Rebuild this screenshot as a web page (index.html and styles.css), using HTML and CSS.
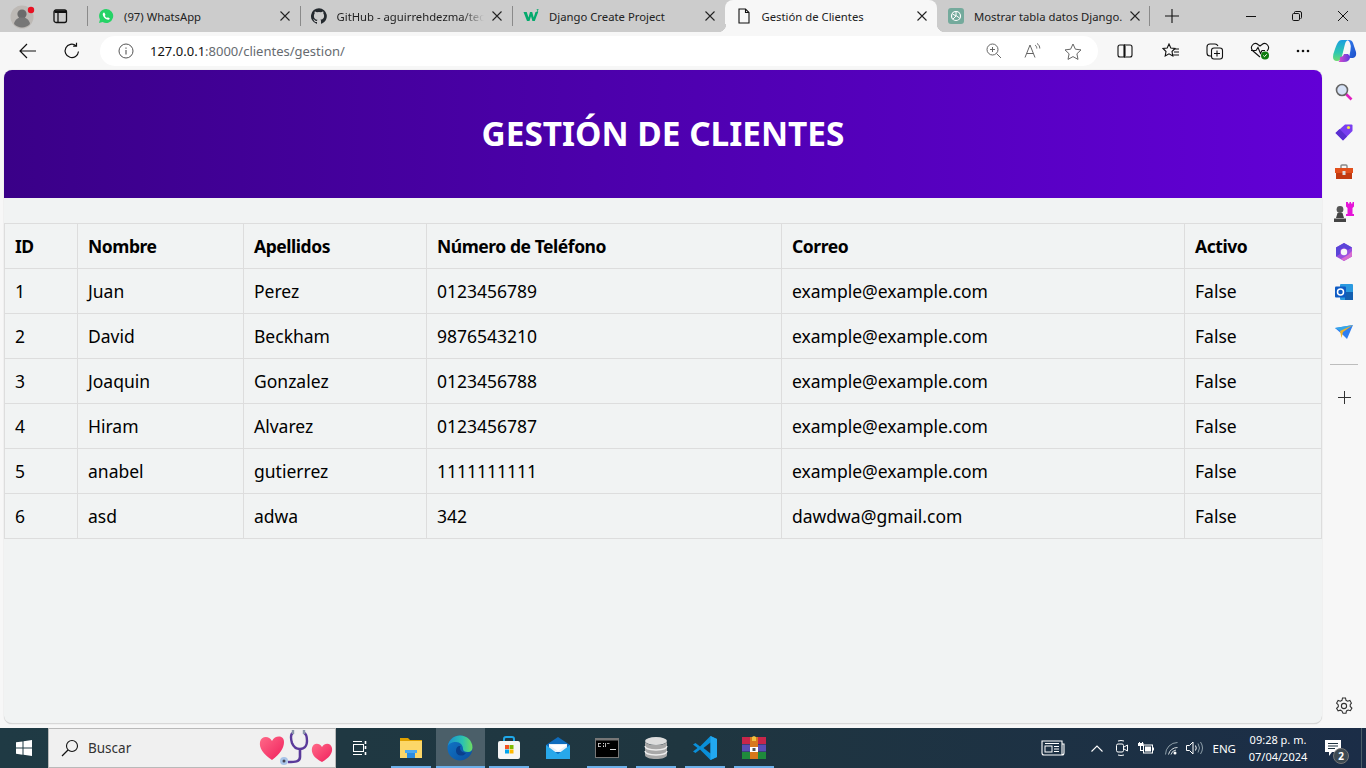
FILE: index.html
```html
<!DOCTYPE html>
<html>
  <head>
    <meta charset="utf-8">
    <title>Gestión de Clientes</title>
    <link rel="stylesheet" href="styles.css">
  </head>
  <body>
    <div class="tabstrip">
      <div class="profile">
        <svg width="28" height="28" viewBox="0 0 28 28"><circle cx="13" cy="15" r="11.500" fill="#bdb9b5"/><circle cx="13" cy="12" r="4.600" fill="#6b6b6b"/><path d="M5 22c1-5 4-6.500 8-6.500s7 1.500 8 6.500c-2 2.200-5 3.500-8 3.500s-6-1.300-8-3.500z" fill="#777"/><circle cx="22" cy="8" r="3.200" fill="#e81123"/></svg>
      </div>
      <div class="workspace">
        <svg width="16" height="16" viewBox="0 0 16 16"><rect x="2" y="2" width="12.500" height="12.500" rx="2" fill="none" stroke="#111" stroke-width="1.300"/><path d="M6 5v9.500" stroke="#111" stroke-width="1.300" fill="none"/><path d="M2.500 2.500h11.500v2.500H2.500z" fill="#111"/></svg>
      </div>
      <div class="tab sep">
        <svg class="fav" width="16" height="16" viewBox="0 0 16 16"><path d="M8 1a7 7 0 0 0-6 10.500L1 15l3.600-1A7 7 0 1 0 8 1z" fill="#25d366"/><path d="M5.800 4.500c-.8.400-1.300 1.500-.9 2.800.6 2 2.400 3.800 4.300 4.300 1.300.3 2.400-.3 2.600-1.200l-1.900-1.200-.9.800c-1-.4-1.800-1.200-2.200-2.200l.7-.9-1-2.200z" fill="#fff"/></svg>
        <span class="tab-title">(97) WhatsApp</span>
        <svg class="close" width="10" height="10" viewBox="0 0 10 10"><path d="M.5.500l9 9M9.500.500l-9 9" stroke="#222" stroke-width="1.100"/></svg>
      </div>
      <div class="tab sep">
        <svg class="fav" width="16" height="16" viewBox="0 0 16 16"><path d="M8 .2a8 8 0 0 0-2.500 15.600c.4.100.5-.2.500-.4v-1.400c-2.200.5-2.700-1-2.700-1-.4-.9-.9-1.200-.9-1.200-.7-.5.100-.5.100-.5.800.1 1.200.8 1.200.8.700 1.200 1.900.9 2.300.7.100-.5.300-.9.500-1.100-1.800-.2-3.600-.9-3.600-4 0-.9.300-1.600.8-2.100-.1-.2-.4-1 .1-2.100 0 0 .7-.2 2.200.8a7.600 7.600 0 0 1 4 0c1.500-1 2.200-.8 2.200-.8.400 1.100.2 1.900.1 2.100.5.600.8 1.300.8 2.100 0 3.100-1.900 3.700-3.700 3.900.3.300.6.800.6 1.500v2.200c0 .2.100.5.600.4A8 8 0 0 0 8 .2z" fill="#24292e"/></svg>
        <span class="tab-title fade">GitHub - aguirrehdezma/tec</span>
        <svg class="close" width="10" height="10" viewBox="0 0 10 10"><path d="M.5.500l9 9M9.500.500l-9 9" stroke="#222" stroke-width="1.100"/></svg>
      </div>
      <div class="tab sep">
        <svg class="fav" width="16" height="16" viewBox="0 0 16 16"><path d="M.5 4h3.200l1.800 5.500L7 4h2.200l1.500 5.500L12.500 4h2.700l-3.400 9H9.400L8 8.300 6.500 13H4z" fill="#04aa6d"/><path d="M13.500 1h2v.6l-.8.800c.5.200.7.500.6.900-.1.500-.8.800-1.700.6v-.6c.6.100 1 0 1-.3 0-.200-.3-.300-.6-.300v-.4l.6-.7h-1.100z" fill="#04aa6d"/></svg>
        <span class="tab-title">Django Create Project</span>
        <svg class="close" width="10" height="10" viewBox="0 0 10 10"><path d="M.5.500l9 9M9.500.500l-9 9" stroke="#222" stroke-width="1.100"/></svg>
      </div>
      <div class="tab active">
        <svg class="fav" width="16" height="16" viewBox="0 0 16 16"><path d="M3 1h6.500L13 4.500V15H3z M9.500 1v3.500H13" fill="none" stroke="#111" stroke-width="1.100"/></svg>
        <span class="tab-title">Gestión de Clientes</span>
        <svg class="close" width="10" height="10" viewBox="0 0 10 10"><path d="M.5.500l9 9M9.500.500l-9 9" stroke="#222" stroke-width="1.100"/></svg>
      </div>
      <div class="tab">
        <svg class="fav" width="16" height="16" viewBox="0 0 16 16"><rect width="16" height="16" rx="3" fill="#74aa9c"/><circle cx="8" cy="8" r="4.500" fill="none" stroke="#fff" stroke-width="1.200"/><path d="M8 3.500v4L11.500 10M4.500 6l3.500 2-3 3" fill="none" stroke="#fff" stroke-width="1"/></svg>
        <span class="tab-title">Mostrar tabla datos Django.</span>
        <svg class="close" width="10" height="10" viewBox="0 0 10 10"><path d="M.5.500l9 9M9.500.500l-9 9" stroke="#222" stroke-width="1.100"/></svg>
      </div>
      <div class="newtab">
        <svg width="14" height="14" viewBox="0 0 14 14"><path d="M7 0v14M0 7h14" stroke="#111" stroke-width="1.100"/></svg>
      </div>
      <div class="winctl">
        <span class="winbtn"><svg width="10" height="10" viewBox="0 0 10 10"><path d="M0 5.500h10" stroke="#111"/></svg></span>
        <span class="winbtn"><svg width="10" height="10" viewBox="0 0 10 10"><rect x=".5" y="2.500" width="7" height="7" rx="1.200" fill="none" stroke="#111"/><path d="M2.500 2.500V1.500q0-1 1-1h4.500q1.500 0 1.500 1.500v4.500q0 1-1 1" fill="none" stroke="#111"/></svg></span>
        <span class="winbtn"><svg width="10" height="10" viewBox="0 0 10 10"><path d="M0 0l10 10M10 0L0 10" stroke="#111"/></svg></span>
      </div>
    </div>

    <div class="toolbar">
      <span class="nav-btn">
        <svg width="18" height="16" viewBox="0 0 18 16"><path d="M17 8H1M8 1L1 8l7 7" fill="none" stroke="#111" stroke-width="1.200"/></svg>
      </span>
      <span class="nav-btn">
        <svg width="18" height="18" viewBox="0 0 18 18"><path d="M15.500 9.500A6.700 6.700 0 1 1 13 3.600M13.500 0.800v3.400h-3.400" fill="none" stroke="#111" stroke-width="1.200"/></svg>
      </span>
      <div class="address">
        <svg class="info" width="16" height="16" viewBox="0 0 16 16"><circle cx="8" cy="8" r="7" fill="none" stroke="#555"/><path d="M8 7v4.500M8 4.500v1.200" stroke="#555" stroke-width="1.100"/></svg>
        <span class="url"><b>127.0.0.1</b>:8000/clientes/gestion/</span>
        <span class="addr-icons">
          <svg width="16" height="16" viewBox="0 0 16 16"><circle cx="6.500" cy="6.500" r="5.500" fill="none" stroke="#666"/><path d="M10.500 10.500L15 15M4 6.500h5M6.500 4v5" stroke="#666"/></svg>
          <svg width="18" height="16" viewBox="0 0 18 16"><path d="M1 14.500L6 2l5 12.500M2.800 10.500h6.400" fill="none" stroke="#666"/><path d="M11 2c1.200.8 1.800 2 1.800 3.500M13 .5c1.800 1 2.800 3 2.800 5" fill="none" stroke="#666"/></svg>
          <svg width="18" height="17" viewBox="0 0 18 17"><path d="M9 1l2.400 5.200 5.600.7-4.100 3.900 1.100 5.600L9 13.600l-5 2.800 1.100-5.600L1 6.900l5.600-.7z" fill="none" stroke="#666"/></svg>
        </span>
      </div>
      <div class="tools">
        <svg class="t-split" width="16" height="14" viewBox="0 0 16 14"><path d="M7 1H3Q1 1 1 3v8q0 2 2 2h4zM9 1h4q2 0 2 2v8q0 2-2 2H9M8 0v14" fill="none" stroke="#111" stroke-width="1.100"/></svg>
        <svg width="18" height="17" viewBox="0 0 18 17"><path d="M7 1l1.800 4 4.200.5-3 3 .8 4.500L7 10.800 3.200 13 4 8.500 1 5.500 5.200 5z" fill="none" stroke="#111" stroke-width="1.100"/><path d="M12 6h5M12 9h5M11 12h6" stroke="#111" stroke-width="1.100"/></svg>
        <svg width="18" height="18" viewBox="0 0 18 18"><path d="M5 14H4Q1 14 1 11V5q0-3 3-3h5q2 0 3 2" fill="none" stroke="#111" stroke-width="1.100"/><rect x="5.500" y="6" width="11" height="11" rx="2.500" fill="#f7f7f7" stroke="#111" stroke-width="1.100"/><path d="M11 8.500v6M8 11.500h6" stroke="#111" stroke-width="1.100"/></svg>
        <svg width="20" height="18" viewBox="0 0 20 18"><path d="M10 15L3 9Q0 6 2.500 3T8 2.500L10 4l2-1.500Q15 0 17.500 3T17 9M1 8.500h5l2-3 2.500 6 1.500-3h3" fill="none" stroke="#111" stroke-width="1.100"/><circle cx="15" cy="13.500" r="4" fill="#107c10"/><path d="M13.300 13.500l1.200 1.200 2.200-2.400" fill="none" stroke="#fff"/></svg>
        <svg width="14" height="4" viewBox="0 0 14 4"><circle cx="2" cy="2" r="1.300" fill="#111"/><circle cx="7" cy="2" r="1.300" fill="#111"/><circle cx="12" cy="2" r="1.300" fill="#111"/></svg>
      </div>
      <svg class="copilot" width="24" height="24" viewBox="0 0 24 24">
        <defs>
          <linearGradient id="cpA" x1="0" y1="0" x2="0" y2="1"><stop offset="0" stop-color="#1a9ee0"/><stop offset=".6" stop-color="#2ec8b0"/><stop offset="1" stop-color="#6fdc70"/></linearGradient>
          <linearGradient id="cpB" x1="0" y1="0" x2="1" y2="1"><stop offset="0" stop-color="#2f7df0"/><stop offset="1" stop-color="#1f4fc8"/></linearGradient>
          <linearGradient id="cpC" x1="0" y1="0" x2="1" y2="0"><stop offset="0" stop-color="#e04fc8"/><stop offset="1" stop-color="#5a3be0"/></linearGradient>
        </defs>
        <path d="M9 1h7q-3 0-4 4l-3 12q-1 5-5 5-4 0-4-4 0-3 2-8 2-6 4-8 1-1 3-1z" fill="url(#cpA)"/>
        <path d="M14 1h2q3 0 4 3l3 9q1 5-3 6h-4l1.500-8q1-4-.5-7-.5-2-2.500-3z" fill="url(#cpB)"/>
        <path d="M7 18q3 0 4-3h4q3 3 2 4-1 4-6 4H5q2 0 2-5z" fill="url(#cpC)"/>
      </svg>
    </div>

    <div class="middle">
      <main class="page">
        <header class="page-header">
          <h1>GESTIÓN DE CLIENTES</h1>
        </header>
        <table class="clients">
          <colgroup>
            <col class="c-id"><col class="c-name"><col class="c-last"><col class="c-phone"><col class="c-mail"><col class="c-active">
          </colgroup>
          <thead>
            <tr><th>ID</th><th>Nombre</th><th>Apellidos</th><th>Número de Teléfono</th><th>Correo</th><th>Activo</th></tr>
          </thead>
          <tbody>
            <tr><td>1</td><td>Juan</td><td>Perez</td><td>0123456789</td><td>example@example.com</td><td>False</td></tr>
            <tr><td>2</td><td>David</td><td>Beckham</td><td>9876543210</td><td>example@example.com</td><td>False</td></tr>
            <tr><td>3</td><td>Joaquin</td><td>Gonzalez</td><td>0123456788</td><td>example@example.com</td><td>False</td></tr>
            <tr><td>4</td><td>Hiram</td><td>Alvarez</td><td>0123456787</td><td>example@example.com</td><td>False</td></tr>
            <tr><td>5</td><td>anabel</td><td>gutierrez</td><td>1111111111</td><td>example@example.com</td><td>False</td></tr>
            <tr><td>6</td><td>asd</td><td>adwa</td><td>342</td><td>dawdwa@gmail.com</td><td>False</td></tr>
          </tbody>
        </table>
      </main>

      <aside class="sidebar">
        <span class="side-btn"><svg width="18" height="18" viewBox="0 0 18 18"><path d="M11 11l5.500 5.500" stroke="#e020c0" stroke-width="2.600"/><circle cx="7" cy="7" r="5.500" fill="#d6e2f6" stroke="#666" stroke-width="1.600"/></svg></span>
        <span class="side-btn"><svg width="18" height="18" viewBox="0 0 18 18"><path d="M10 1.500h6.500q1 0 1 1V8L8 17.500 .5 10z" fill="#7a3ff0"/><path d="M.5 10L8 17.500 12 13.500 4.500 6z" fill="#5a2fd0"/><circle cx="13.500" cy="4.500" r="1.600" fill="#f5e642"/></svg></span>
        <span class="side-btn"><svg width="18" height="16" viewBox="0 0 18 16"><path d="M6 4V2q0-1 1-1h4q1 0 1 1v2" fill="none" stroke="#888" stroke-width="1.400"/><path d="M0 4h18v5H0z" fill="#e2501c"/><path d="M1 9h16v6H1z" fill="#c23a10"/><rect x="7.500" y="7" width="3" height="4" fill="#ddd"/></svg></span>
        <span class="side-btn"><svg width="20" height="20" viewBox="0 0 20 20"><path d="M12 0h2v1.500h1.500V0h1.500v1.500h1.500V0H20v4.500l-1.500 1.500v6H20v2h-8v-2h1.500V6L12 4.500z" fill="#e515d8"/><circle cx="6" cy="7.500" r="3.400" fill="#555"/><path d="M3.500 11h5l1.500 5H2zM0 16.500h12V20H0z" fill="#444"/></svg></span>
        <span class="side-btn"><svg width="18" height="18" viewBox="0 0 18 18"><path d="M9 0l8 4.500v9L9 18l-8-4.500v-9z" fill="#9a4fe0"/><path d="M9 0l8 4.500-4 2.500-4-2.500-4 2.500v4L1 13.500v-9z" fill="#5a45d8"/><path d="M17 8v5.500L9 18l-3-2 7-4z" fill="#d86cd0"/><circle cx="9" cy="9" r="3.200" fill="#f7f7f7"/></svg></span>
        <span class="side-btn"><svg width="18" height="18" viewBox="0 0 18 18"><rect x="5" y="1" width="13" height="16" rx="1" fill="#2a9ae0"/><rect x="10" y="9" width="8" height="8" fill="#135fb0"/><rect y="3.500" width="11" height="11" rx="1" fill="#0f5bc4"/><circle cx="5.500" cy="9" r="3" fill="none" stroke="#fff" stroke-width="1.500"/></svg></span>
        <span class="side-btn"><svg width="18" height="16" viewBox="0 0 18 16"><path d="M0 4l18-3-6 14-4-4z" fill="#2f7ff0"/><path d="M0 4l18-3L6 7z" fill="#36a7e8"/><path d="M5 7L18 1 8 8 6.500 14z" fill="#f0b429"/></svg></span>
        <span class="side-line"></span>
        <span class="side-btn"><svg width="13" height="13" viewBox="0 0 13 13"><path d="M6.500 0v13M0 6.500h13" stroke="#333"/></svg></span>
        <span class="side-btn side-bottom"><svg width="18" height="18" viewBox="0 0 18 18"><path d="M7.500 1h3l.5 2.300 1.600.9 2.300-.7 1.500 2.600L15.200 7.700v1.800l1.700 1.600-1.500 2.600-2.300-.7-1.600.9-.5 2.300h-3L7 14.100l-1.600-.9-2.300.7-1.500-2.600 1.700-1.600V7.900L1.600 6.100l1.500-2.600 2.300.7L7 3.300z" fill="none" stroke="#333" stroke-width="1.100"/><circle cx="9" cy="9" r="2.600" fill="none" stroke="#333" stroke-width="1.100"/></svg></span>
      </aside>
    </div>

    <footer class="taskbar">
      <span class="start">
        <svg width="16" height="16" viewBox="0 0 16 16"><path d="M0 2.300l6.500-.9v6.200H0zM7.500 1.300L16 0v7.600H7.500zM0 8.500h6.500v6.200L0 13.800zM7.500 8.500H16V16l-8.500-1.200z" fill="#fff"/></svg>
      </span>
      <div class="search">
        <svg width="18" height="18" viewBox="0 0 18 18"><circle cx="11" cy="7" r="5.500" fill="none" stroke="#111" stroke-width="1.100"/><path d="M7 11l-6 6" stroke="#111" stroke-width="1.300"/></svg>
        <span class="search-text">Buscar</span>
        <svg class="doodle" width="76" height="38" viewBox="0 0 76 38">
          <defs><linearGradient id="hrt" x1="0" y1="0" x2="1" y2="1"><stop offset="0" stop-color="#ff6a88"/><stop offset="1" stop-color="#f01f5c"/></linearGradient></defs>
          <path d="M15 31C6 25 2 19 3 13 4 7 12 6 15 12c3-6 12-6 12 1 0 6-4 12-12 18z" fill="url(#hrt)"/>
          <path d="M65 33c-8-4-11-9-10-14 1-5 7-6 10-1 3-5 9-4 10 1 1 5-3 10-10 14z" fill="url(#hrt)"/>
          <path d="M36 4C33 5 34 11 35 14 37 19 40 20 43 20 46 20 50 18 50 12 50 9 50 5 47 4" fill="none" stroke="#5a3a9a" stroke-width="2.400"/>
          <path d="M36 1v4M47 1v4" stroke="#8a97ab" stroke-width="2.400"/>
          <path d="M43 20v8c0 5-5 5-12 5" fill="none" stroke="#5a3a9a" stroke-width="2.600"/>
          <circle cx="27" cy="32" r="4" fill="#a8c4e8"/><circle cx="27" cy="32" r="1.500" fill="#445"/>
        </svg>
      </div>
      <span class="taskview">
        <svg width="16" height="16" viewBox="0 0 16 16"><path d="M1 1.500h9M1 14.500h9" stroke="#fff"/><rect x="1.500" y="4.500" width="10" height="7" fill="none" stroke="#fff"/><path d="M13.500 1v3M13.500 6v3M13.500 12v3" stroke="#fff" stroke-width="1.600"/></svg>
      </span>
      <span class="app open">
        <svg width="24" height="22" viewBox="0 0 24 22"><path d="M1 1h8l2 2h12v6H1z" fill="#e0a100"/><rect x="1" y="4" width="22" height="17" fill="#fcd768"/><rect x="8" y="13" width="8" height="8" fill="#2b8ce0"/><rect x="6" y="13" width="12" height="3" fill="#4aa8ee"/></svg>
      </span>
      <span class="app open active">
        <svg width="26" height="26" viewBox="0 0 26 26">
          <defs>
            <linearGradient id="edA" x1="0" y1="0" x2="1" y2="0"><stop offset="0" stop-color="#1a8fd0"/><stop offset=".6" stop-color="#2cc2b0"/><stop offset="1" stop-color="#6fdc60"/></linearGradient>
            <linearGradient id="edB" x1="0" y1="0" x2="1" y2="1"><stop offset="0" stop-color="#1178c8"/><stop offset="1" stop-color="#0b4fa0"/></linearGradient>
          </defs>
          <circle cx="13" cy="13" r="12.500" fill="url(#edB)"/>
          <path d="M.8 11C2 4.500 7.500.5 13 .5c7 0 12.500 5.500 12.500 12 0 2.500-1.500 4.500-4.500 4.500-3.500 0-5-1-5-3 0-4-3-7-7-7C4.500 7 2 9 .8 11z" fill="url(#edA)"/>
          <path d="M9 15.500c0-3 2-5 4.800-4.500-1.800 1.500-.8 6.500 5.200 7-2.500 4-10 3.500-10-2.500z" fill="#0a3f8c"/>
        </svg>
      </span>
      <span class="app open">
        <svg width="24" height="24" viewBox="0 0 24 24"><path d="M7 6V3q0-2 2-2h6q2 0 2 2v3" fill="none" stroke="#1fa8e8" stroke-width="2"/><rect x="1" y="5" width="22" height="18" rx="2" fill="#f5f5f5"/><rect x="8" y="9" width="4" height="4" fill="#f25022"/><rect x="12.500" y="9" width="4" height="4" fill="#7fba00"/><rect x="8" y="13.500" width="4" height="4" fill="#00a4ef"/><rect x="12.500" y="13.500" width="4" height="4" fill="#ffb900"/></svg>
      </span>
      <span class="app">
        <svg width="24" height="24" viewBox="0 0 24 24"><path d="M12 1L0 9v14h24V9z" fill="#0f6cbd"/><path d="M3 8h18v8H3z" fill="#e8f0f8"/><path d="M0 9l12 9 12-9v14H0z" fill="#28a8ea"/><path d="M3 9h18l-9 6z" fill="#fff"/></svg>
      </span>
      <span class="app open">
        <svg width="24" height="20" viewBox="0 0 24 20"><rect width="24" height="20" fill="#777"/><rect x="1" y="2.500" width="22" height="16.500" fill="#000"/><path d="M3 5h3v.8H3.800v2.400H6V9H3zM8 5h1v1H8zM8 7.500h1v1.500H8zM10 5h.8v4H10zM12 5h2.500v.8H12zM15 11h6v1h-6z" fill="#ddd"/></svg>
      </span>
      <span class="app open">
        <svg width="24" height="24" viewBox="0 0 24 24"><ellipse cx="12" cy="5" rx="11" ry="4" fill="#ddd"/><path d="M1 5v14c0 2.500 5 4 11 4s11-1.500 11-4V5c0 2.500-5 4-11 4S1 7.500 1 5z" fill="#a8a8a8"/><path d="M1 10c0 2.500 5 4 11 4s11-1.500 11-4M1 15c0 2.500 5 4 11 4s11-1.500 11-4" fill="none" stroke="#eee" stroke-width="1.300"/></svg>
      </span>
      <span class="app open">
        <svg width="24" height="24" viewBox="0 0 24 24"><path d="M17.500 0L24 3v18l-6.500 3L7 13.500 2.500 17 0 15.500 4.500 12 0 8.500 2.500 7 7 10.500z" fill="#0a8fd8"/><path d="M17.500 6.500L10.500 12l7 5.500z" fill="#1f2f3b"/><path d="M17.500 0L24 3v18l-6.500 3z" fill="#22a8f0"/></svg>
      </span>
      <span class="app open">
        <svg width="24" height="24" viewBox="0 0 24 24"><rect y="1" width="24" height="7" fill="#c8264a"/><rect y="8.500" width="24" height="7" fill="#5b4db5"/><rect y="16" width="24" height="7" fill="#1f8a3c"/><rect x="8" y="1" width="8" height="22" fill="#d8781c"/><path d="M10 1l2-1 2 1v4h-4z" fill="#f0c040"/><rect x="8" y="11" width="8" height="5" fill="#fff"/><rect x="10.500" y="12" width="3" height="3" fill="#555"/></svg>
      </span>

      <div class="tray">
        <svg width="24" height="16" viewBox="0 0 24 16"><path d="M1 1h20v14H3q-2 0-2-2zM21 4h2v9q0 2-2 2" fill="none" stroke="#fff" stroke-width="1.100"/><rect x="4" y="6" width="7" height="6" fill="none" stroke="#fff"/><path d="M4 3.500h14M13 6.500h5M13 9h5M13 11.500h5" stroke="#fff"/></svg>
        <svg class="t-chev" width="12" height="7" viewBox="0 0 12 7"><path d="M.5 6.500L6 1l5.500 5.500" fill="none" stroke="#fff" stroke-width="1.100"/></svg>
        <svg class="t-meet" width="12" height="16" viewBox="0 0 12 16"><path d="M2 1q3-1 6 0M2 15q3 1 6 0" stroke="#fff" fill="none"/><rect x=".5" y="4" width="7" height="8" rx="1.500" fill="none" stroke="#fff"/><path d="M8 7l3.500-2v6L8 9" fill="none" stroke="#fff"/></svg>
        <svg class="t-batt" width="16" height="12" viewBox="0 0 16 12"><rect x="5.500" y="3" width="9" height="8" fill="none" stroke="#fff"/><rect x="7" y="4.500" width="6" height="5" fill="#fff"/><path d="M15 5.500h1v3h-1zM0 1h1v-1h1v1h2v-1h1v1h.5v3H3v4h2.500v1H2V4H0z" fill="#fff"/></svg>
        <svg class="t-wifi" width="13" height="13" viewBox="0 0 13 13"><path d="M.5 12.500a12 12 0 0 1 12-12" fill="none" stroke="#8fa0aa"/><path d="M3.500 12.500a9 9 0 0 1 9-7M6 12.500a6 6 0 0 1 5-4.500" fill="none" stroke="#d6dde0"/><circle cx="10" cy="11" r="1.500" fill="#fff"/></svg>
        <svg class="t-vol" width="17" height="14" viewBox="0 0 17 14"><path d="M.5 4.500h3L7 1v12L3.500 9.500h-3z" fill="none" stroke="#fff"/><path d="M9.500 4.500q1.500 2.500 0 5" fill="none" stroke="#fff"/><path d="M12 2.500q3 4.500 0 9M14.500 1q4 6 0 12" fill="none" stroke="#8fa0aa"/></svg>
        <span class="t-lang">ENG</span>
        <span class="t-clock"><span>09:28 p. m.</span><span>07/04/2024</span></span>
        <span class="t-notif">
          <svg width="16" height="17" viewBox="0 0 16 17"><path d="M0 0h16v12H7l-3 4v-4H0z" fill="#fff"/><path d="M3 3.500h10M3 6h10M3 8.500h7" stroke="#1f3340"/></svg>
          <span class="badge">2</span>
        </span>
      </div>
    </footer>
  </body>
</html>
```

FILE: styles.css
```css
* {
  box-sizing: border-box;
}

html,
body {
  margin: 0;
  height: 768px;
  overflow: hidden;
}

body {
  display: flex;
  flex-direction: column;
  font-family: "Noto Sans", sans-serif;
  background: #f7f7f7;
  color: #000;
}

svg {
  display: block;
  flex: none;
}

/* Tab strip */
.tabstrip {
  display: flex;
  align-items: center;
  height: 32px;
  background: #cccccc;
  flex: none;
}

.profile {
  width: 37px;
  padding-left: 9px;
}

.workspace {
  width: 50px;
  padding-left: 15px;
}

.tab {
  position: relative;
  display: flex;
  align-items: center;
  width: 212.500px;
  height: 32px;
  padding: 0 10px;
  font-size: 11.300px;
  color: #222;
  border-left: 1px solid transparent;
}

.tab.sep::before {
  content: "";
  position: absolute;
  left: -1px;
  top: 6px;
  height: 20px;
  width: 1px;
  background: #8a8a8a;
}

.tab.active {
  background: #f7f7f7;
  border-radius: 8px 8px 0 0;
}

.tab.active::before,
.tab.active::after {
  content: "";
  position: absolute;
  bottom: 0;
  width: 8px;
  height: 8px;
}

.tab.active::before {
  left: -8px;
  background: radial-gradient(circle at 0 0, #cccccc 8px, #f7f7f7 8.500px);
}

.tab.active::after {
  right: -8px;
  background: radial-gradient(circle at 100% 0, #cccccc 8px, #f7f7f7 8.500px);
}

.fav {
  margin-right: 10px;
}

.tab-title {
  flex: 1;
  min-width: 0;
  white-space: nowrap;
}

.fade {
  -webkit-mask-image: linear-gradient(to right, #000 85%, transparent);
  mask-image: linear-gradient(to right, #000 85%, transparent);
}

.close {
  margin: 0 0 0 8px;
}

.newtab {
  width: 44px;
  padding-left: 15px;
  position: relative;
}

.newtab::before {
  content: "";
  position: absolute;
  left: -1px;
  top: -3px;
  width: 1px;
  height: 20px;
  background: #8a8a8a;
}

.winctl {
  margin-left: auto;
  display: flex;
}

.winbtn {
  width: 46px;
  height: 32px;
  display: flex;
  align-items: center;
  justify-content: center;
}

/* Toolbar */
.toolbar {
  display: flex;
  align-items: center;
  height: 38px;
  flex: none;
  background: #f7f7f7;
  padding-left: 6px;
}

.nav-btn {
  width: 44px;
  display: flex;
  justify-content: center;
}

.address {
  display: flex;
  align-items: center;
  width: 998px;
  height: 30px;
  margin-left: 6px;
  padding: 0 16px 0 18px;
  background: #fff;
  border-radius: 15px;
}

.url {
  margin-left: 16px;
  font-size: 13px;
  color: #666b70;
}

.url b {
  font-weight: 400;
  color: #111;
}

.addr-icons {
  margin-left: auto;
  display: flex;
  align-items: center;
  gap: 22px;
}

.tools {
  display: flex;
  align-items: center;
  gap: 26px;
  margin-left: 19px;
}

.t-split {
  margin-right: 3px;
}

.copilot {
  margin-left: 23px;
}

/* Page */
.middle {
  display: flex;
  height: 658px;
  flex: none;
  padding-left: 4px;
}

.page {
  width: 1318px;
  height: 654px;
  background: #f1f3f3;
  border-radius: 8px;
  border-bottom: 1px solid #d8d8d8;
  overflow: hidden;
  box-shadow: 0 0 1px #bbb;
}

.page-header {
  display: flex;
  align-items: center;
  justify-content: center;
  height: 128px;
  padding-bottom: 2px;
  background: linear-gradient(to right, #3a0088, #6200d6);
}

.page-header h1 {
  margin: 0;
  font-size: 33.400px;
  font-weight: 700;
  color: #fff;
}

.clients {
  width: 1317px;
  margin-top: 25px;
  border-collapse: collapse;
  table-layout: fixed;
  font-size: 17.500px;
}

.c-id { width: 73px; }
.c-name { width: 166px; }
.c-last { width: 183px; }
.c-phone { width: 355px; }
.c-mail { width: 403px; }
.c-active { width: 137px; }

.clients th,
.clients td {
  height: 45px;
  padding: 0 10px;
  border: 1px solid #dddddd;
  text-align: left;
  white-space: nowrap;
}

.clients th {
  font-weight: 700;
  letter-spacing: -0.450px;
}

/* Sidebar */
.sidebar {
  display: flex;
  flex-direction: column;
  align-items: center;
  width: 44px;
  height: 654px;
  padding-top: 2px;
}

.side-btn {
  height: 40px;
  flex: none;
  display: flex;
  align-items: center;
  justify-content: center;
}

.side-line {
  width: 28px;
  height: 1px;
  margin: 12px 0;
  background: #bdbdbd;
  flex: none;
}

.side-bottom {
  margin-top: auto;
  margin-bottom: -2px;
}

/* Taskbar */
.taskbar {
  display: flex;
  align-items: stretch;
  height: 40px;
  flex: none;
  background: linear-gradient(to right, #1f3a44, #1f3640 50%, #1b2d47);
}

.start {
  width: 48px;
  display: flex;
  align-items: center;
  justify-content: center;
}

.search {
  display: flex;
  align-items: center;
  width: 288px;
  padding-left: 12px;
  background: #f0f0f0;
  border: 1px solid #b9b9b9;
}

.search-text {
  margin-left: 9px;
  font-size: 13.500px;
  color: #333;
}

.doodle {
  margin-left: auto;
  margin-right: 2px;
}

.taskview {
  width: 51px;
  display: flex;
  align-items: center;
  justify-content: center;
  padding-right: 3px;
}

.app {
  position: relative;
  width: 49px;
  display: flex;
  align-items: center;
  justify-content: center;
}

.app svg {
  margin-right: 2px;
}

.app.open::after {
  content: "";
  position: absolute;
  left: 4px;
  right: 5px;
  bottom: 0;
  height: 2px;
  background: #6cb0ea;
}

.app.active {
  background: #4b5f69;
}

.app.active::after {
  left: 0;
  right: 0;
}

.tray {
  position: relative;
  display: flex;
  align-items: center;
  margin-left: auto;
  padding-right: 25px;
  color: #fff;
}

.tray::after {
  content: "";
  position: absolute;
  right: 4px;
  top: 0;
  bottom: 0;
  width: 1px;
  background: #4b5f69;
}

.t-chev { margin-left: 26px; }
.t-meet { margin-left: 13px; }
.t-batt { margin-left: 10px; }
.t-wifi { margin-left: 11px; }
.t-vol { margin-left: 8px; }

.t-lang {
  margin-left: 9px;
  font-size: 11.500px;
}

.t-clock {
  display: flex;
  flex-direction: column;
  align-items: center;
  width: 58px;
  margin-left: 13px;
  font-size: 11px;
  line-height: 17px;
  white-space: nowrap;
}

.t-notif {
  position: relative;
  width: 16px;
  margin-left: 18px;
}

.badge {
  position: absolute;
  left: 8px;
  top: 8px;
  width: 16px;
  height: 16px;
  border-radius: 50%;
  background: #3d4a52;
  border: 1px solid #777;
  font-size: 10px;
  font-weight: 700;
  line-height: 14px;
  text-align: center;
}
```
